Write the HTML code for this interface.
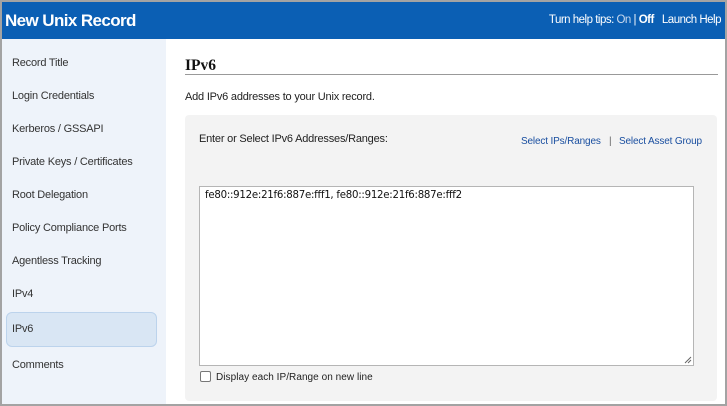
<!DOCTYPE html>
<html><head><style>
*{margin:0;padding:0;box-sizing:border-box}
body{width:727px;height:406px;background:#a3a3a3;font-family:"Liberation Sans",Arial,sans-serif;position:relative;overflow:hidden}
.frame{position:absolute;left:2px;top:2px;width:723px;height:402px;background:#fff;overflow:hidden}
.hdr{position:absolute;left:0;top:0;width:723px;height:37px;background:#0b5fb4;color:#fff}
.hdr .t{position:absolute;left:3px;top:9px;font-size:17px;font-weight:bold;letter-spacing:-0.6px}
.hdr .r{position:absolute;right:4px;top:12px;font-size:11.5px;letter-spacing:-0.5px}
.hdr .r span.on{color:#c9d9ee}
.side{position:absolute;left:0;top:37px;width:164px;height:370px;background:#eef3fa}
.side div{position:absolute;left:10px;font-size:11px;color:#333;letter-spacing:-0.2px}
.sel{position:absolute;left:4px;top:273px;width:151px;height:35px;background:#d9e6f4;border:1px solid #bcd3ec;border-radius:6px}
.h2{position:absolute;left:183px;top:55px;font-family:"Liberation Serif",serif;font-weight:bold;font-size:15.5px;color:#111}
.rule{position:absolute;left:183px;top:72px;width:533px;height:1px;background:#999}
.desc{position:absolute;left:183px;top:89px;font-size:11px;color:#222;letter-spacing:-0.2px}
.box{position:absolute;left:183px;top:113px;width:532px;height:286px;background:#f3f3f3;border-radius:4px}
.lbl{position:absolute;left:197px;top:131px;font-size:11px;color:#222;letter-spacing:-0.2px}
.lnk{position:absolute;top:134px;font-size:10px;color:#1a4fa0;letter-spacing:-0.15px}
.ta{position:absolute;left:197px;top:184px;width:495px;height:180px;background:#fff;border:1px solid #b5b5b5}
.ta span{position:absolute;left:5px;top:3px;font-family:"DejaVu Sans",sans-serif;font-size:10.2px;color:#111;letter-spacing:-0.25px}
.cb{position:absolute;left:198px;top:369px;width:11px;height:11px;border:1px solid #777;border-radius:2px;background:#fff}
.cbl{position:absolute;left:214px;top:370px;font-size:10px;color:#222;letter-spacing:0.05px}
</style></head><body>
<div class="frame">
<div class="hdr"><div class="t">New Unix Record</div><div class="r">Turn help tips: <span class="on">On</span> | <b>Off</b> &nbsp;&nbsp;Launch Help</div></div>
<div class="side">
<div style="top:18px">Record Title</div>
<div style="top:51px">Login Credentials</div>
<div style="top:84px">Kerberos / GSSAPI</div>
<div style="top:117px">Private Keys / Certificates</div>
<div style="top:150px">Root Delegation</div>
<div style="top:183px">Policy Compliance Ports</div>
<div style="top:216px">Agentless Tracking</div>
<div style="top:249px">IPv4</div>
<span class="sel"></span>
<div style="top:284px">IPv6</div>
<div style="top:320px">Comments</div>
</div>
<div class="h2">IPv6</div>
<div class="rule"></div>
<div class="desc">Add IPv6 addresses to your Unix record.</div>
<div class="box"></div>
<div class="lbl">Enter or Select IPv6 Addresses/Ranges:</div>
<div class="lnk" style="left:519px">Select IPs/Ranges</div>
<div class="lnk" style="left:607px;color:#666">|</div>
<div class="lnk" style="left:617px">Select Asset Group</div>
<div class="ta"><span>fe80::912e:21f6:887e:fff1, fe80::912e:21f6:887e:fff2</span>
<svg style="position:absolute;right:1px;bottom:1px" width="8" height="8"><path d="M7 1L1 7M7 4L4 7" stroke="#666" stroke-width="1"/></svg></div>
<div class="cb"></div>
<div class="cbl">Display each IP/Range on new line</div>
</div>
</body></html>
